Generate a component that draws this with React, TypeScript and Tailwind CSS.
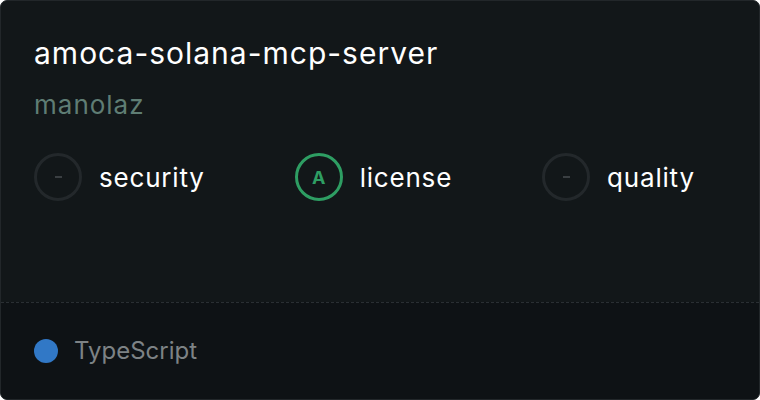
const scores = [
  { label: "security", grade: "-" },
  { label: "license", grade: "A" },
  { label: "quality", grade: "-" },
];

function Badge({ grade }: { grade: string }) {
  const graded = grade !== "-";
  return (
    <div
      className={
        graded
          ? "w-12 h-12 rounded-full border-[3px] border-[#2e9e63] flex items-center justify-center text-[18px] font-bold text-[#2e9e63] shrink-0"
          : "w-12 h-12 rounded-full border-[3px] border-[#23282b] flex items-center justify-center shrink-0"
      }
    >
      {graded ? grade : <span className="w-[7px] h-[2px] bg-[#3a3f42]" aria-label="-" />}
    </div>
  );
}

export default function App() {
  return (
    <div className="w-[760px] h-[400px] bg-white" style={{ fontFamily: "Inter, 'Noto Sans', sans-serif" }}>
      <div className="w-full h-full rounded-[7px] border border-[#22272a] bg-[#121719] overflow-hidden flex flex-col">
        {/* Top — name, owner, scores */}
        <div className="flex-1 px-[33px] pt-[33px]">
          <h1 className="text-[30px] leading-[38px] tracking-[1px] text-white">amoca-solana-mcp-server</h1>
          <p className="mt-[18px] text-[26px] leading-[30px] tracking-[1px] text-[#5f7d74]">manolaz</p>

          <div className="mt-[33px] flex items-center gap-[90px]">
            {scores.map((s) => (
              <div key={s.label} className="flex items-center gap-[17px]">
                <Badge grade={s.grade} />
                <span className="text-[26px] tracking-[0.8px] text-white">{s.label}</span>
              </div>
            ))}
          </div>
        </div>

        {/* Bottom — language */}
        <div className="h-[97px] border-t border-dashed border-[#2a2f33] bg-[#0e1215] px-[33px] flex items-center gap-4">
          <span className="w-6 h-6 rounded-full bg-[#3178c6]" aria-hidden="true" />
          <span className="text-[24px] text-[#7d8285]">TypeScript</span>
        </div>
      </div>
    </div>
  );
}
